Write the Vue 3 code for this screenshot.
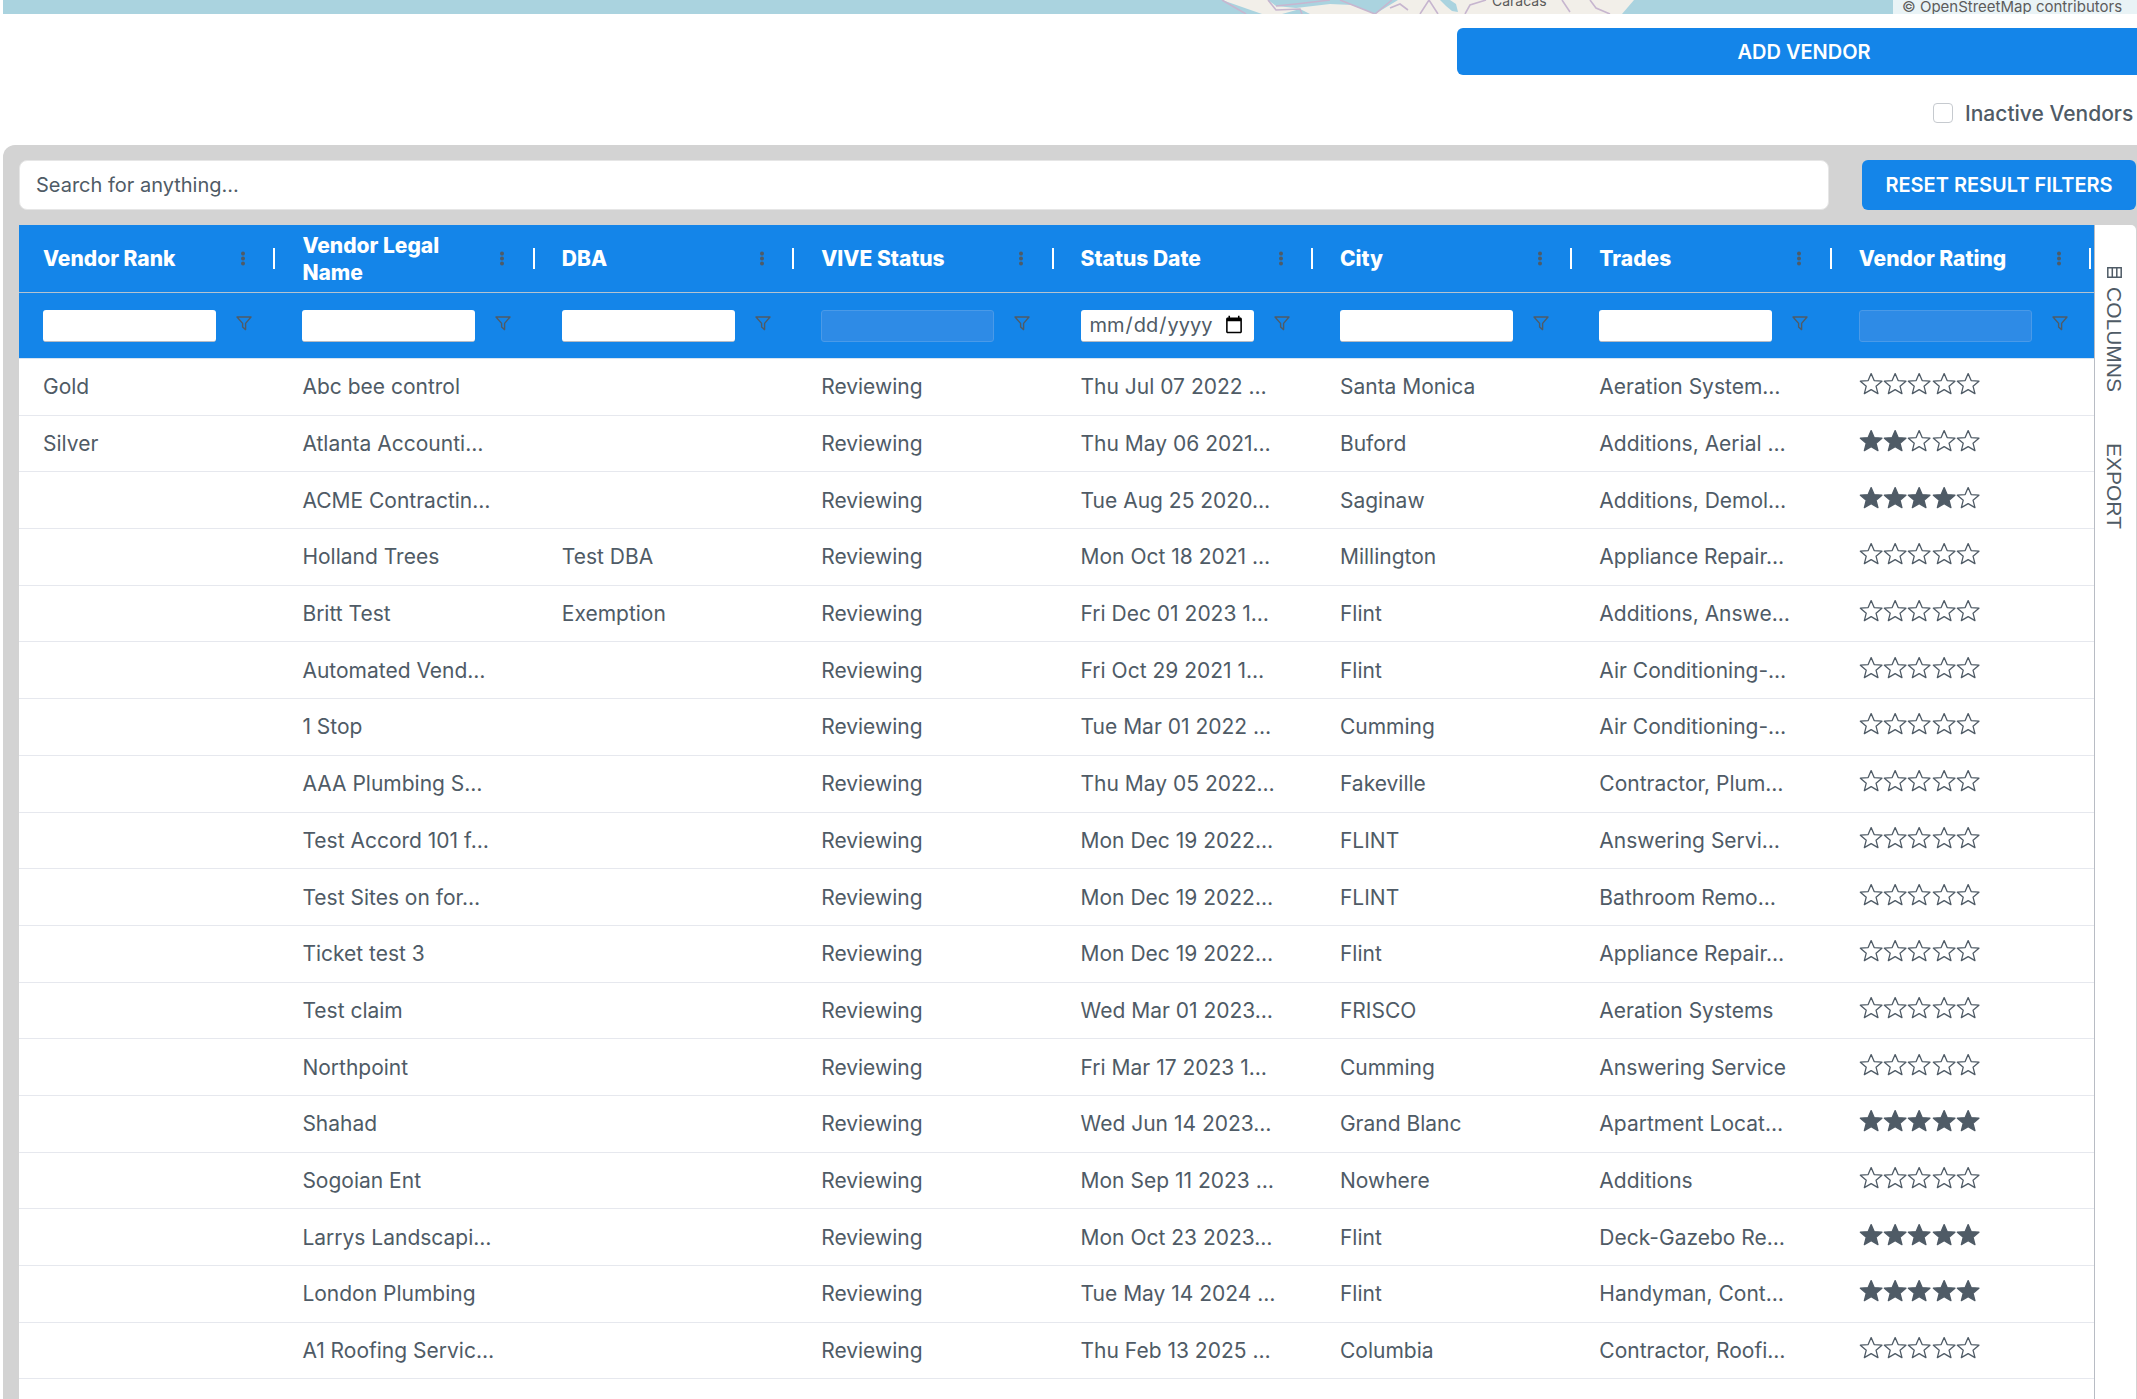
<template>
  <div class="page">
    <div class="map">
      <svg class="map-tiles" width="2134" height="14" viewBox="0 0 2134 14">
        <path d="M1222 0 L1262 14 L1622 14 L1634 0 Z" fill="#f2efe9" />
        <path d="M1268 0 L1276 6 L1296 8 L1330 4 L1352 5 L1375 14 L1398 0 Z" fill="#aad3df" />
        <path d="M1282 14 L1300 9 L1310 14 Z" fill="#aad3df" />
        <path d="M1440 0 L1446 6 L1452 11 L1458 12 L1456 4 L1450 0 Z" fill="#aad3df" />
        <path d="M1222 0 L1246 14 M1268 0 L1276 10 L1300 9 L1302 14 M1276 6 L1296 4 L1330 0 M1340 0 L1375 14 L1392 0 M1390 8 L1400 4 L1408 10 M1420 14 L1429 0 L1438 14 M1465 14 L1470 5 L1486 0 M1562 0 L1570 12 M1590 0 L1596 8 L1610 14"
          fill="none" stroke="#c7b6cf" stroke-width="1.6" />
      </svg>
      <span class="map-city">Caracas</span>
      <div class="map-credit">© OpenStreetMap contributors</div>
    </div>

    <div class="actions">
      <button class="add-btn">ADD VENDOR</button>
    </div>
    <div class="inactive">
      <span class="check"></span>
      <span class="inactive-label">Inactive Vendors</span>
    </div>

    <div class="panel">
      <div class="toolbar">
        <div class="search">Search for anything...</div>
        <button class="reset-btn">RESET RESULT FILTERS</button>
      </div>

      <div class="grid-wrap">
        <div class="grid">
          <div class="head">
            <div v-for="col in columns" :key="col.name" class="head-cell">
              <span class="head-title">{{ col.name }}</span>
              <svg class="dots" width="6" height="15" viewBox="0 0 6 15">
                <circle cx="3" cy="2.5" r="2" />
                <circle cx="3" cy="7.5" r="2" />
                <circle cx="3" cy="12.5" r="2" />
              </svg>
              <span class="sep"></span>
            </div>
          </div>
          <div class="filters">
            <div v-for="col in columns" :key="col.name" class="filter-cell">
              <input v-if="col.type === 'date'" class="filter-input" type="date" />
              <input v-else class="filter-input" :class="{ off: col.type === 'off' }" type="text" :disabled="col.type === 'off'" />
              <svg class="funnel" width="16" height="15" viewBox="0 0 16 15">
                <path d="M1 1 H15 L9.6 7.4 V13.6 L6.6 11 V7.4 Z" fill="none" stroke="#4f5b66" stroke-width="1.4" stroke-linejoin="round" />
              </svg>
            </div>
          </div>
          <div class="body">
            <div v-for="row in rows" :key="row.name" class="row">
              <div class="cell">{{ row.rank }}</div>
              <div class="cell">{{ row.name }}</div>
              <div class="cell">{{ row.dba }}</div>
              <div class="cell">Reviewing</div>
              <div class="cell">{{ row.date }}</div>
              <div class="cell">{{ row.city }}</div>
              <div class="cell">{{ row.trades }}</div>
              <div class="cell stars">
                <svg v-for="n in 5" :key="n" width="24.3" height="23" viewBox="0 0 24 23">
                  <path d="M12 1.6 L15 8.6 L22.8 9.2 L16.9 14.2 L18.8 21.6 L12 17.6 L5.2 21.6 L7.1 14.2 L1.2 9.2 L9 8.6 Z"
                    :fill="n <= row.stars ? '#4f5b66' : '#fff'" stroke="#4f5b66" stroke-width="1.3" stroke-linejoin="round" />
                </svg>
              </div>
            </div>
          </div>
        </div>
        <div class="side">
          <div class="side-tab">
            <svg class="side-icon" width="15" height="11" viewBox="0 0 15 11">
              <path d="M0.8 0.8 H14.2 V10.2 H0.8 Z M5.3 0.8 V10.2 M9.8 0.8 V10.2" fill="none" stroke="#4f5b66" stroke-width="1.5" />
            </svg>
            <span>COLUMNS</span>
          </div>
          <div class="side-tab export">
            <span>EXPORT</span>
          </div>
        </div>
      </div>
    </div>
  </div>
</template>

<script setup>
const columns = [
  { name: 'Vendor Rank' },
  { name: 'Vendor Legal Name' },
  { name: 'DBA' },
  { name: 'VIVE Status', type: 'off' },
  { name: 'Status Date', type: 'date' },
  { name: 'City' },
  { name: 'Trades' },
  { name: 'Vendor Rating', type: 'off' },
]

const rows = [
  { rank: 'Gold', name: 'Abc bee control', dba: '', date: 'Thu Jul 07 2022 …', city: 'Santa Monica', trades: 'Aeration System…', stars: 0 },
  { rank: 'Silver', name: 'Atlanta Accounti…', dba: '', date: 'Thu May 06 2021…', city: 'Buford', trades: 'Additions, Aerial …', stars: 2 },
  { rank: '', name: 'ACME Contractin…', dba: '', date: 'Tue Aug 25 2020…', city: 'Saginaw', trades: 'Additions, Demol…', stars: 4 },
  { rank: '', name: 'Holland Trees', dba: 'Test DBA', date: 'Mon Oct 18 2021 …', city: 'Millington', trades: 'Appliance Repair…', stars: 0 },
  { rank: '', name: 'Britt Test', dba: 'Exemption', date: 'Fri Dec 01 2023 1…', city: 'Flint', trades: 'Additions, Answe…', stars: 0 },
  { rank: '', name: 'Automated Vend…', dba: '', date: 'Fri Oct 29 2021 1…', city: 'Flint', trades: 'Air Conditioning-…', stars: 0 },
  { rank: '', name: '1 Stop', dba: '', date: 'Tue Mar 01 2022 …', city: 'Cumming', trades: 'Air Conditioning-…', stars: 0 },
  { rank: '', name: 'AAA Plumbing S…', dba: '', date: 'Thu May 05 2022…', city: 'Fakeville', trades: 'Contractor, Plum…', stars: 0 },
  { rank: '', name: 'Test Accord 101 f…', dba: '', date: 'Mon Dec 19 2022…', city: 'FLINT', trades: 'Answering Servi…', stars: 0 },
  { rank: '', name: 'Test Sites on for…', dba: '', date: 'Mon Dec 19 2022…', city: 'FLINT', trades: 'Bathroom Remo…', stars: 0 },
  { rank: '', name: 'Ticket test 3', dba: '', date: 'Mon Dec 19 2022…', city: 'Flint', trades: 'Appliance Repair…', stars: 0 },
  { rank: '', name: 'Test claim', dba: '', date: 'Wed Mar 01 2023…', city: 'FRISCO', trades: 'Aeration Systems', stars: 0 },
  { rank: '', name: 'Northpoint', dba: '', date: 'Fri Mar 17 2023 1…', city: 'Cumming', trades: 'Answering Service', stars: 0 },
  { rank: '', name: 'Shahad', dba: '', date: 'Wed Jun 14 2023…', city: 'Grand Blanc', trades: 'Apartment Locat…', stars: 5 },
  { rank: '', name: 'Sogoian Ent', dba: '', date: 'Mon Sep 11 2023 …', city: 'Nowhere', trades: 'Additions', stars: 0 },
  { rank: '', name: 'Larrys Landscapi…', dba: '', date: 'Mon Oct 23 2023…', city: 'Flint', trades: 'Deck-Gazebo Re…', stars: 5 },
  { rank: '', name: 'London Plumbing', dba: '', date: 'Tue May 14 2024 …', city: 'Flint', trades: 'Handyman, Cont…', stars: 5 },
  { rank: '', name: 'A1 Roofing Servic…', dba: '', date: 'Thu Feb 13 2025 …', city: 'Columbia', trades: 'Contractor, Roofi…', stars: 0 },
]
</script>

<style scoped>
.page {
  width: 2137px;
  height: 1399px;
  overflow: hidden;
  background: #fff;
  color: #4f5b66;
  font-family: Inter, "Liberation Sans", sans-serif;
  display: flex;
  flex-direction: column;
}

/* map strip, only the bottom edge of it shows */
.map {
  position: relative;
  height: 14px;
  margin-left: 3px;
  flex: none;
  overflow: hidden;
  background: #aad3df;
}
.map-tiles {
  position: absolute;
  top: 0;
  left: -3px;
}
.map-city {
  position: absolute;
  left: 1489px;
  top: -9px;
  font-size: 14px;
  line-height: 20px;
  color: #5a5a5a;
}
.map-credit {
  position: absolute;
  left: 1890px;
  right: 0;
  top: 0;
  bottom: 0;
  padding-left: 9px;
  background: #e9f3f6;
  font-size: 15px;
  line-height: 14px;
  margin-top: 0;
  color: #5c5c5c;
  white-space: nowrap;
}

.actions {
  display: flex;
  justify-content: flex-end;
  padding-top: 14px;
  flex: none;
}
.add-btn {
  width: 694px;
  height: 47px;
  margin-right: -14px;
  flex: none;
  border: 0;
  border-radius: 6px;
  background: #1485e9;
  color: #fff;
  font: 600 20px Inter, "Liberation Sans", sans-serif;
}

.inactive {
  display: flex;
  align-items: center;
  gap: 12px;
  height: 22px;
  margin-top: 27px;
  padding-left: 1933px;
  white-space: nowrap;
  flex: none;
}
.check {
  width: 20px;
  height: 20px;
  flex: none;
  background: #fff;
  border: 1px solid #c6cacf;
  border-radius: 4px;
  box-sizing: border-box;
}
.inactive-label {
  font-size: 21px;
  font-weight: 500;
}

.panel {
  flex: 1;
  margin-top: 21px;
  margin-left: 3px;
  padding: 15px 1px 0 16px;
  display: flex;
  flex-direction: column;
  min-height: 0;
  background: #d3d3d3;
  border-top-left-radius: 12px;
}
.toolbar {
  display: flex;
  gap: 33px;
  height: 50px;
  margin-bottom: 15px;
  flex: none;
}
.search {
  flex: 1;
  display: flex;
  align-items: center;
  padding-left: 16px;
  background: #fff;
  border: 1px solid #e6e6e6;
  border-radius: 8px;
  font-size: 20px;
}
.reset-btn {
  width: 274px;
  flex: none;
  border: 0;
  border-radius: 6px;
  background: #1485e9;
  color: #fff;
  font: 600 20px Inter, "Liberation Sans", sans-serif;
  white-space: nowrap;
  padding: 0;
}

.grid-wrap {
  flex: 1;
  display: flex;
  min-height: 0;
}
.grid {
  width: 2075px;
  flex: none;
  overflow: hidden;
  background: #fff;
  display: flex;
  flex-direction: column;
}
.head,
.filters,
.row {
  display: grid;
  grid-template-columns: repeat(8, 259.4px);
}
.head {
  height: 67px;
  flex: none;
  background: #1485e9;
  border-bottom: 1px solid #b5c3d0;
}
.head-cell {
  position: relative;
  display: flex;
  align-items: center;
  padding-left: 24px;
}
.head-title {
  width: 170px;
  color: #fff;
  font-size: 21px;
  font-weight: 800;
  line-height: 27px;
}
.dots {
  position: absolute;
  left: 221px;
  top: 26px;
  fill: #4f5b66;
}
.sep {
  position: absolute;
  right: 3px;
  top: 23px;
  width: 2px;
  height: 21px;
  background: #fff;
}
.filters {
  height: 65px;
  flex: none;
  background: #1485e9;
  border-bottom: 1px solid #d6e4f2;
}
.filter-cell {
  display: flex;
  align-items: center;
  padding-left: 24px;
}
.filter-input {
  width: 173px;
  height: 32px;
  box-sizing: border-box;
  margin-top: 0;
  padding: 0 8px;
  background: #fff;
  border: 0;
  border-bottom: 1px solid #b8bcc4;
  border-radius: 3px;
  color: #4f5b66;
  font: 20px Inter, "Liberation Sans", sans-serif;
}
.filter-input.off {
  background: #2e8be6;
  border: 1px solid #4a9ae8;
}
.funnel {
  margin-left: 20px;
  margin-top: -5px;
  flex: none;
}

.body {
  flex: 1;
}
.row {
  height: 56.7px;
  box-sizing: border-box;
  border-bottom: 1px solid #e6e8ee;
}
.cell {
  display: flex;
  align-items: center;
  padding-left: 24px;
  font-size: 21px;
  white-space: nowrap;
  overflow: hidden;
}
.stars {
  gap: 0;
  padding-bottom: 6px;
  box-sizing: border-box;
}

.side {
  flex: 1;
  display: flex;
  flex-direction: column;
  align-items: center;
  padding-top: 42px;
  padding-right: 2px;
  background: #fff;
  border-left: 1px solid #b8bcc4;
  border-top-right-radius: 5px;
  box-sizing: border-box;
}
.side-tab {
  display: flex;
  flex-direction: column;
  align-items: center;
  gap: 9px;
  font: 21px "Liberation Sans", Arial, sans-serif;
  color: #4f5b66;
}
.side-tab span {
  writing-mode: vertical-lr;
  line-height: 21px;
}
.side-icon {
  flex: none;
}
.export {
  margin-top: 51px;
}
</style>

<style>
html,
body {
  margin: 0;
  overflow: hidden;
}
</style>
